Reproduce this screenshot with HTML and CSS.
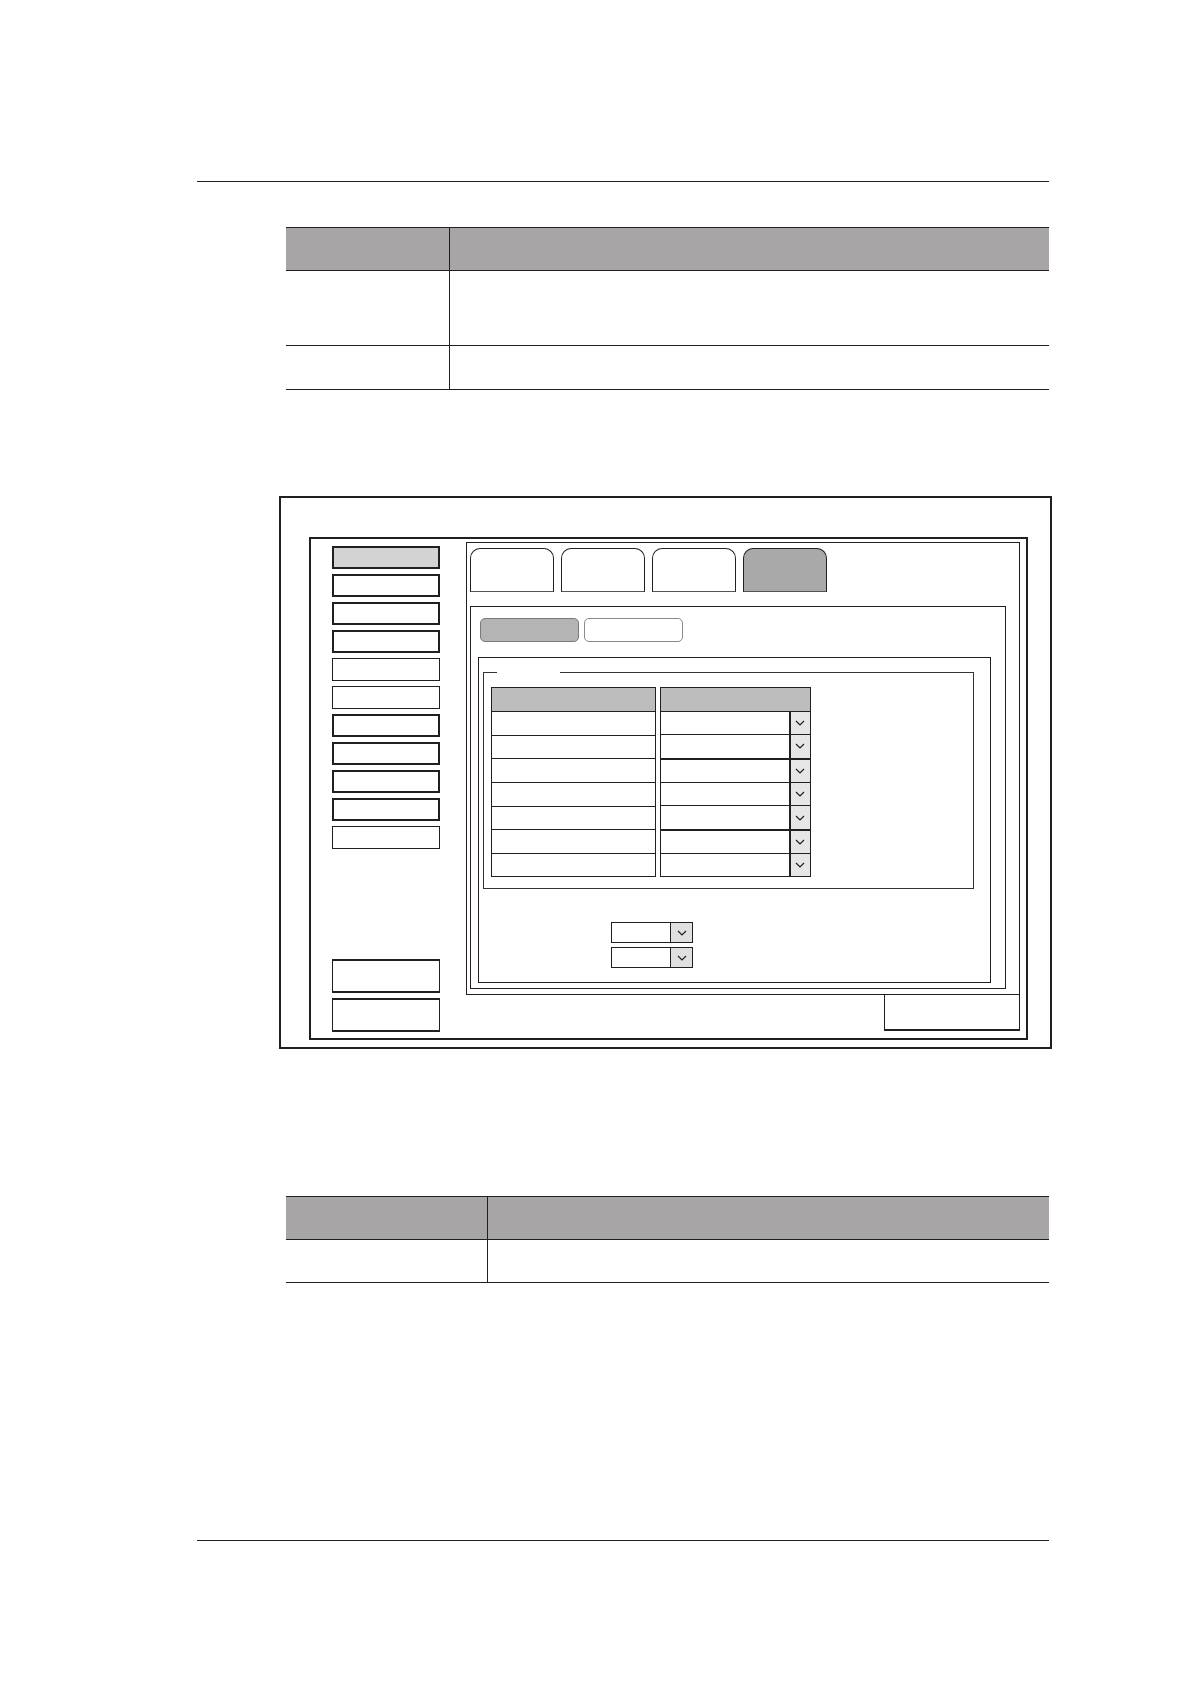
FILE: index.html
```html
<!DOCTYPE html>
<html lang="en">
<head>
<meta charset="utf-8">
<title>Settings screen</title>
<link rel="stylesheet" href="styles.css">
</head>
<body>
<div class="page">
  <div class="rule"></div>

  <div class="dt dt-1">
    <div class="dt-row dt-head"><div class="dt-cell"></div><div class="dt-cell"></div></div>
    <div class="dt-row dt-tall"><div class="dt-cell"></div><div class="dt-cell"></div></div>
    <div class="dt-row dt-short"><div class="dt-cell"></div><div class="dt-cell"></div></div>
  </div>

  <div class="figure">
    <div class="screen">
      <div class="side">
        <div class="side-top">
          <div class="sbtn active"></div>
          <div class="sbtn"></div>
          <div class="sbtn"></div>
          <div class="sbtn"></div>
          <div class="sbtn thin"></div>
          <div class="sbtn thin"></div>
          <div class="sbtn"></div>
          <div class="sbtn"></div>
          <div class="sbtn"></div>
          <div class="sbtn"></div>
          <div class="sbtn thin"></div>
        </div>
        <div class="side-bottom">
          <div class="bbtn"></div>
          <div class="bbtn"></div>
        </div>
      </div>

      <div class="main">
        <div class="mainbox">
          <div class="tabs">
            <div class="tab"></div>
            <div class="tab"></div>
            <div class="tab"></div>
            <div class="tab active"></div>
          </div>
          <div class="panel">
            <div class="subtabs">
              <div class="subtab active"></div>
              <div class="subtab"></div>
            </div>
            <div class="group">
              <div class="fset">
                <span class="legend-gap"></span>
                <div class="grid">
                  <div class="gcol gcol-left">
                    <div class="gcell ghead"></div>
                    <div class="gcell"></div>
                    <div class="gcell"></div>
                    <div class="gcell"></div>
                    <div class="gcell"></div>
                    <div class="gcell"></div>
                    <div class="gcell"></div>
                    <div class="gcell"></div>
                  </div>
                  <div class="gcol gcol-right">
                    <div class="gcell ghead"></div>
                    <div class="gcell gsel"><span class="gval"></span><span class="arrow"><svg width="10" height="6" viewBox="0 0 10 6"><path d="M1 1 L5 5 L9 1"/></svg></span></div>
                    <div class="gcell gsel thick"><span class="gval"></span><span class="arrow"><svg width="10" height="6" viewBox="0 0 10 6"><path d="M1 1 L5 5 L9 1"/></svg></span></div>
                    <div class="gcell gsel"><span class="gval"></span><span class="arrow"><svg width="10" height="6" viewBox="0 0 10 6"><path d="M1 1 L5 5 L9 1"/></svg></span></div>
                    <div class="gcell gsel"><span class="gval"></span><span class="arrow"><svg width="10" height="6" viewBox="0 0 10 6"><path d="M1 1 L5 5 L9 1"/></svg></span></div>
                    <div class="gcell gsel thick"><span class="gval"></span><span class="arrow"><svg width="10" height="6" viewBox="0 0 10 6"><path d="M1 1 L5 5 L9 1"/></svg></span></div>
                    <div class="gcell gsel"><span class="gval"></span><span class="arrow"><svg width="10" height="6" viewBox="0 0 10 6"><path d="M1 1 L5 5 L9 1"/></svg></span></div>
                    <div class="gcell gsel"><span class="gval"></span><span class="arrow"><svg width="10" height="6" viewBox="0 0 10 6"><path d="M1 1 L5 5 L9 1"/></svg></span></div>
                  </div>
                </div>
              </div>
              <div class="selects">
                <div class="sel"><span class="sval"></span><span class="sarrow"><svg width="10" height="6" viewBox="0 0 10 6"><path d="M1 1 L5 5 L9 1"/></svg></span></div>
                <div class="sel"><span class="sval"></span><span class="sarrow"><svg width="10" height="6" viewBox="0 0 10 6"><path d="M1 1 L5 5 L9 1"/></svg></span></div>
              </div>
            </div>
          </div>
        </div>
        <div class="foot">
          <div class="fbtn"></div>
        </div>
      </div>
    </div>
  </div>

  <div class="dt dt-2">
    <div class="dt-row dt-head"><div class="dt-cell"></div><div class="dt-cell"></div></div>
    <div class="dt-row dt-one"><div class="dt-cell"></div><div class="dt-cell"></div></div>
  </div>

  <div class="rule rule-bottom"></div>
</div>
</body>
</html>
```

FILE: styles.css
```css
* { box-sizing: border-box; }
html, body { margin: 0; padding: 0; background: #ffffff; }
body { font-family: "Liberation Sans", Arial, sans-serif; }

.page { width: 1191px; height: 1684px; padding-top: 180.5px; }

.rule { margin-left: 197px; width: 852px; border-top: 1.5px solid #231f20; }
.rule-bottom { margin-top: 257px; }

/* document tables */
.dt { margin-left: 286px; width: 763px; border-top: 1.5px solid #231f20; }
.dt-1 { margin-top: 45px; }
.dt-2 { margin-top: 146.5px; }
.dt-row { display: grid; border-bottom: 1.5px solid #231f20; }
.dt-1 .dt-row { grid-template-columns: 164px 1fr; }
.dt-2 .dt-row { grid-template-columns: 202px 1fr; }
.dt-cell:first-child { border-right: 1px solid #231f20; }
.dt-head { background: #a7a5a6; height: 43px; }
.dt-tall { height: 75.5px; }
.dt-short { height: 44px; }
.dt-one { height: 43.5px; }

/* figure */
.figure {
  margin-top: 106px;
  margin-left: 279px;
  width: 773px;
  height: 553px;
  border: 2.5px solid #231f20;
  padding: 39px 22px 7px 28px;
}
.screen {
  height: 100%;
  border: 2px solid #231f20;
  display: flex;
}
.side {
  width: 155px;
  padding: 7px 0 6px 21px;
  display: flex;
  flex-direction: column;
  justify-content: space-between;
}
.side-top, .side-bottom { display: flex; flex-direction: column; gap: 5px; }
.sbtn { width: 108px; height: 23px; border: 2px solid #231f20; background: #fff; }
.sbtn.thin { border-width: 1.5px; }
.sbtn.active { background: #d3d3d3; }
.bbtn { width: 108px; height: 34px; border: 2px solid #231f20; border-width: 2.5px 1.5px 2.5px 1.5px; }

.main { width: 554px; margin-top: 3px; display: flex; flex-direction: column; }
.mainbox {
  height: 453px;
  border: 1.5px solid #231f20;
  padding: 5px 0 0 2.5px;
}
.tabs { display: flex; gap: 6.5px; }
.tab {
  width: 84.5px;
  height: 44px;
  border: 1.5px solid #231f20;
  border-bottom-color: #555;
  border-radius: 10px 10px 0 0;
  background: #fff;
}
.tab.active { background: #a9a9a9; }

.panel {
  margin-top: 14px;
  margin-left: 0.3px;
  width: 536.7px;
  height: 383px;
  border: 1.5px solid #231f20;
  padding-top: 11px;
}
.subtabs { display: flex; gap: 5px; padding-left: 9px; }
.subtab {
  width: 99.3px;
  height: 24.4px;
  border: 1px solid #8a8a8a;
  border-radius: 5px;
  background: #fff;
}
.subtab.active { background: #b4b4b4; border-color: #7a7a7a; }

.group {
  margin-top: 14.6px;
  margin-left: 7.5px;
  width: 512.5px;
  height: 326px;
  border: 1.5px solid #231f20;
  padding: 14.5px 0 0 3.5px;
}
.fset {
  position: relative;
  width: 491.3px;
  height: 217px;
  border: 1.5px solid #333;
  padding: 14px 0 0 7px;
}
.legend-gap {
  position: absolute;
  top: -1.5px;
  left: 13.5px;
  width: 62.5px;
  height: 1.5px;
  background: #fff;
}
.grid { display: flex; gap: 3.6px; }
.gcol { height: 190px; border: 1.5px solid #231f20; display: flex; flex-direction: column; }
.gcol-left { width: 165.4px; }
.gcol-right { width: 151.4px; }
.gcell { flex: 1; border-bottom: 1.5px solid #231f20; }
.gcell:last-child { border-bottom: none; }
.ghead { background: #bdbdbd; }
.gsel { display: flex; }
.gsel.thick { border-bottom-width: 2px; }
.gval { flex: 1; }
.arrow {
  width: 21.5px;
  border-left: 2px solid #231f20;
  background: #e6e6e6;
  display: flex;
  align-items: center;
  justify-content: center;
}
.arrow svg path, .sarrow svg path { fill: none; stroke: #231f20; stroke-width: 1.2; }

.selects {
  margin-top: 33px;
  margin-left: 128.5px;
  display: flex;
  flex-direction: column;
  gap: 4.5px;
}
.sel {
  width: 82px;
  height: 20.5px;
  border: 1.5px solid #231f20;
  display: flex;
}
.sval { flex: 1; }
.sarrow {
  width: 22px;
  border-left: 1px solid #231f20;
  background: #e0e0e0;
  display: flex;
  align-items: center;
  justify-content: center;
}

.foot { display: flex; justify-content: flex-end; }
.fbtn {
  width: 136px;
  height: 36px;
  border: 1.5px solid #231f20;
  border-top: none;
  border-bottom-width: 2.5px;
}
```
